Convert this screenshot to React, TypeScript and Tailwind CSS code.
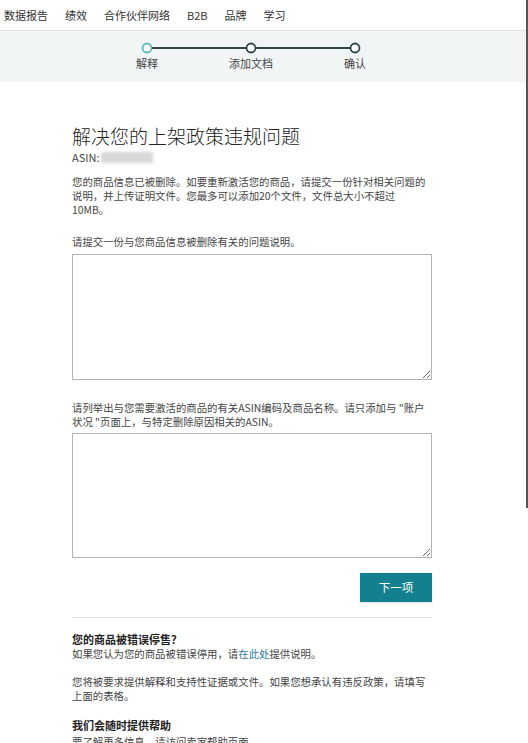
const font = { fontFamily: '"Noto Sans CJK SC", "Liberation Sans", sans-serif' };

const navItems = ["数据报告", "绩效", "合作伙伴网络", "B2B", "品牌", "学习"];
const steps = ["解释", "添加文档", "确认"];

function Stepper() {
  return (
    <div className="h-[52px] border-t border-[#dfe3e3] bg-[#f2f5f5]">
      <div className="ml-[95px] w-[312px] pt-[10px]">
        <svg width="312" height="14" viewBox="0 0 312 14" className="block">
          <line x1="57" y1="7" x2="255" y2="7" stroke="#2f4646" strokeWidth="2" />
          <circle cx="52" cy="7" r="4.5" fill="#fff" stroke="#5ab9bb" strokeWidth="1.8" />
          <circle cx="156" cy="7" r="4.5" fill="#fff" stroke="#2f4646" strokeWidth="1.8" />
          <circle cx="260" cy="7" r="4.5" fill="#fff" stroke="#2f4646" strokeWidth="1.8" />
        </svg>
        <div className="grid grid-cols-3 text-center text-[11px] leading-[16px] text-[#444]">
          {steps.map((s) => (
            <span key={s}>{s}</span>
          ))}
        </div>
      </div>
    </div>
  );
}

export default function App() {
  return (
    <div className="relative h-[743px] w-[528px] overflow-hidden bg-white text-[#333]" style={font}>
      <div className="flex h-[30px] items-center gap-[17px] pl-[4px] text-[11px] text-[#333]">
        {navItems.map((n) => (
          <span key={n}>{n}</span>
        ))}
      </div>
      <Stepper />

      <div className="ml-[72px] w-[360px] pt-[41px]">
        <h1 className="text-[19px] font-light leading-[26px] text-[#222]">解决您的上架政策违规问题</h1>
        <div className="mt-[1px] flex items-center text-[11px] leading-[14px] text-[#444]">
          ASIN:
          <span className="ml-[2px] inline-block h-[11px] w-[52px] bg-[#d8d8d8] blur-[1.5px]" />
        </div>
        <p className="mt-[11px] whitespace-nowrap text-[10.4px] leading-[14px] text-[#444]">
          您的商品信息已被删除。如要重新激活您的商品，请提交一份针对相关问题的
          <br />
          说明，并上传证明文件。您最多可以添加20个文件，文件总大小不超过
          <br />
          10MB。
        </p>
        <p className="mt-[18px] text-[10.4px] leading-[14px] text-[#444]">请提交一份与您商品信息被删除有关的问题说明。</p>
        <textarea className="mt-[5px] block h-[126px] w-[360px] resize-y border border-[#b4b4b4] bg-white" />
        <p className="mt-[21px] whitespace-nowrap text-[10.4px] leading-[14px] text-[#444]">
          请列举出与您需要激活的商品的有关ASIN编码及商品名称。请只添加与 "账户
          <br />
          状况 "页面上，与特定删除原因相关的ASIN。
        </p>
        <textarea className="mt-[4px] block h-[125px] w-[360px] resize-y border border-[#b4b4b4] bg-white" />
        <div className="mt-[15px] flex justify-end">
          <button className="h-[29px] w-[72px] bg-[#13808f] text-[11.5px] text-white shadow-sm">下一项</button>
        </div>
        <div className="mt-[15px] border-t border-[#e3e3e3]" />
        <h2 className="mt-[14px] text-[11px] font-bold leading-[14px] text-[#222]">您的商品被错误停售？</h2>
        <p className="mt-[1px] text-[10.4px] leading-[14px] text-[#444]">
          如果您认为您的商品被错误停用，请<span className="text-[#1f7d96]">在此处</span>提供说明。
        </p>
        <p className="mt-[14px] whitespace-nowrap text-[10.4px] leading-[14px] text-[#444]">
          您将被要求提供解释和支持性证据或文件。如果您想承认有违反政策，请填写
          <br />
          上面的表格。
        </p>
        <h2 className="mt-[15px] text-[11px] font-bold leading-[14px] text-[#222]">我们会随时提供帮助</h2>
        <p className="mt-[3px] text-[10.4px] leading-[14px] text-[#444]">要了解更多信息，请访问卖家帮助页面。</p>
      </div>

      <div className="absolute right-0 top-0 h-[508px] w-[2px] bg-[#555]" />
    </div>
  );
}
